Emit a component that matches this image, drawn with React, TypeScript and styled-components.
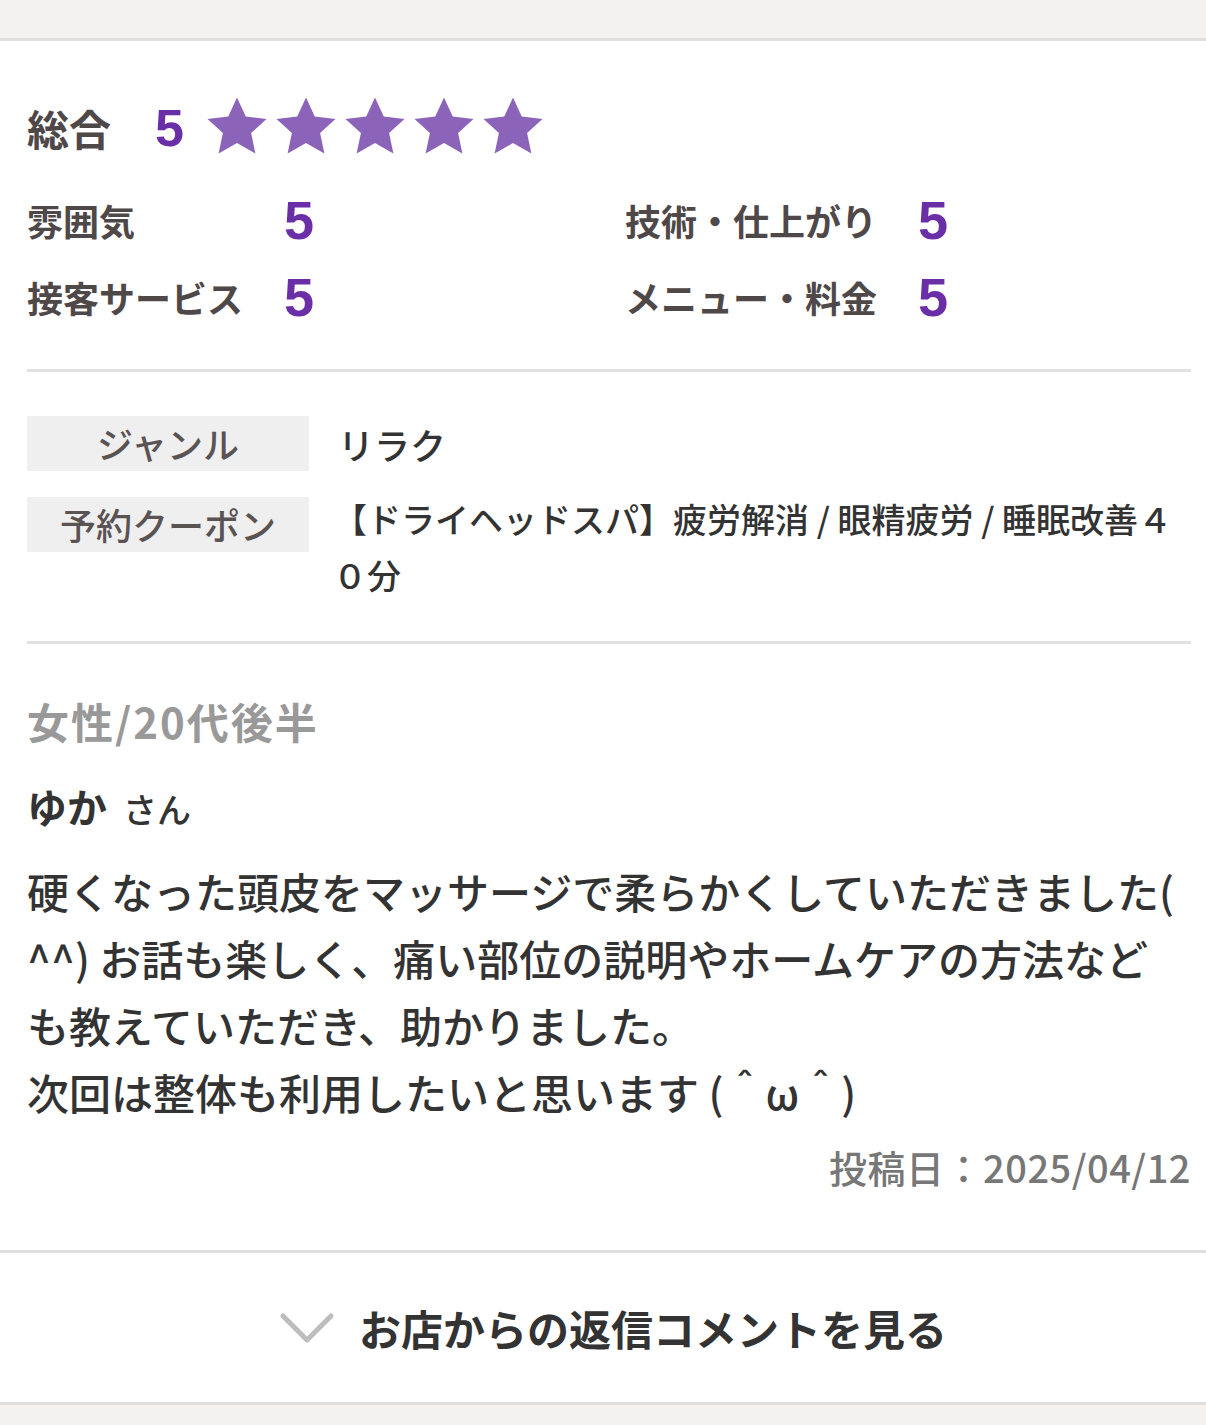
import React, { FC } from "react";
import styled, { createGlobalStyle } from "styled-components";

const GlobalStyle = createGlobalStyle`
  body {
    margin: 0;
    background: #f3f2f1;
    font-family: "Noto Sans CJK JP", "Noto Sans", sans-serif;
    color: #333;
  }
`;

interface Rating {
  label: string;
  score: number;
}

const ratings: Rating[] = [
  { label: "雰囲気", score: 5 },
  { label: "技術・仕上がり", score: 5 },
  { label: "接客サービス", score: 5 },
  { label: "メニュー・料金", score: 5 },
];

const Star: FC = () => (
  <svg width="64" height="60" viewBox="0 0 24 23">
    <path
      d="M12 0.6l3.35 7.3 7.95 0.9-5.9 5.4 1.65 7.85L12 18.05l-7.05 4 1.65-7.85-5.9-5.4 7.95-0.9z"
      fill="#8b63b8"
    />
  </svg>
);

const Chevron: FC = () => (
  <svg width="56" height="32" viewBox="0 0 56 32">
    <polyline
      points="4,4 28,28 52,4"
      fill="none"
      stroke="#bdbdbd"
      strokeWidth="5"
      strokeLinecap="round"
      strokeLinejoin="round"
    />
  </svg>
);

const App: FC = () => {
  return (
    <>
      <GlobalStyle />
      <TopBand />
      <Card>
        <Body>
          <TotalRow>
            <TotalLabel>総合</TotalLabel>
            <TotalScore>5</TotalScore>
            <Stars>
              {[0, 1, 2, 3, 4].map((i) => (
                <Star key={i} />
              ))}
            </Stars>
          </TotalRow>

          <RatingGrid>
            {ratings.map((r) => (
              <React.Fragment key={r.label}>
                <RatingLabel>{r.label}</RatingLabel>
                <RatingScore>{r.score}</RatingScore>
              </React.Fragment>
            ))}
          </RatingGrid>

          <Divider />

          <InfoTable>
            <InfoLabel>ジャンル</InfoLabel>
            <InfoValue>リラク</InfoValue>
            <InfoLabel>予約クーポン</InfoLabel>
            <InfoValue $small>
              【ドライヘッドスパ】疲労解消 / 眼精疲労 / 睡眠改善４０分
            </InfoValue>
          </InfoTable>

          <Divider $top={38} />

          <Profile>女性/20代後半</Profile>
          <Name>
            ゆか<Honorific>さん</Honorific>
          </Name>
          <Comment>
            硬くなった頭皮をマッサージで柔らかくしていただきました(
            <br />
            ^^) お話も楽しく、痛い部位の説明やホームケアの方法など
            <br />
            も教えていただき、助かりました。
            <br />
            次回は整体も利用したいと思います (＾ω＾)
          </Comment>
          <PostDate>投稿日：2025/04/12</PostDate>
        </Body>

        <ReplyButton type="button">
          <Chevron />
          <span>お店からの返信コメントを見る</span>
        </ReplyButton>
      </Card>
    </>
  );
};

const TopBand = styled.div`
  height: 38px;
  background: #f3f2f1;
`;

const Card = styled.section`
  background: #fff;
  border-top: 3px solid #dedede;
  border-bottom: 3px solid #dedede;
  margin-bottom: 20px;
`;

const Body = styled.div`
  padding: 57px 15px 58px 27px;
  border-bottom: 3px solid #dedede;
`;

const TotalRow = styled.div`
  display: flex;
  align-items: center;
  height: 60px;
`;

const TotalLabel = styled.span`
  font-size: 42px;
  font-weight: 700;
  color: #4f4849;
  width: 128px;
  line-height: 1;
`;

const TotalScore = styled.span`
  font-family: "Liberation Sans", Arial, sans-serif;
  font-size: 52px;
  font-weight: 700;
  color: #6a2ea6;
  width: 50px;
  line-height: 1;
`;

const Stars = styled.div`
  display: flex;
  gap: 5px;
  margin-top: -4px;
`;

const RatingGrid = styled.div`
  display: grid;
  grid-template-columns: 257px 341px 293px 1fr;
  grid-auto-rows: 60px;
  row-gap: 17px;
  margin-top: 32px;
  align-items: center;
`;

const RatingLabel = styled.span`
  font-size: 36px;
  font-weight: 700;
  color: #4f4849;
  line-height: 1;
`;

const RatingScore = styled.span`
  font-family: "Liberation Sans", Arial, sans-serif;
  font-size: 54px;
  font-weight: 700;
  color: #6a2ea6;
  line-height: 1;
`;

const Divider = styled.hr<{ $top?: number }>`
  border: none;
  height: 3px;
  background: #e2e2e2;
  margin: ${({ $top = 42 }) => $top}px 0 0;
`;

const InfoTable = styled.div`
  display: grid;
  grid-template-columns: 282px 1fr;
  column-gap: 29px;
  row-gap: 25px;
  margin-top: 44px;
  align-items: start;
`;

const InfoLabel = styled.div`
  height: 55px;
  background: #efefef;
  color: #5a5354;
  font-size: 36px;
  font-weight: 500;
  line-height: 55px;
  text-align: center;
`;

const InfoValue = styled.div<{ $small?: boolean }>`
  font-size: ${({ $small }) => ($small ? 34 : 36)}px;
  font-weight: 500;
  line-height: 56px;
  color: #333;
  margin: ${({ $small }) => ($small ? "-6px 0 0 -5px" : "0")};
`;

const Profile = styled.div`
  margin-top: 47px;
  font-size: 42px;
  font-weight: 700;
  line-height: 60px;
  color: #999;
  letter-spacing: 2px;
`;

const Name = styled.div`
  margin-top: 25px;
  font-size: 40px;
  font-weight: 700;
  line-height: 60px;
  color: #333;
`;

const Honorific = styled.span`
  font-size: 34px;
  font-weight: 500;
  margin-left: 16px;
`;

const Comment = styled.p`
  margin: 18px 0 0;
  font-size: 42px;
  font-weight: 500;
  line-height: 67px;
  color: #333;
`;

const PostDate = styled.div`
  margin-top: 17px;
  text-align: right;
  font-size: 38px;
  font-weight: 500;
  line-height: 50px;
  color: #777;
  letter-spacing: 0.5px;
`;

const ReplyButton = styled.button`
  display: flex;
  align-items: center;
  justify-content: center;
  gap: 24px;
  width: 100%;
  height: 149px;
  padding: 0 0 0 20px;
  border: none;
  background: #fff;
  font-family: "Noto Sans CJK JP", "Noto Sans", sans-serif;
  font-size: 42px;
  font-weight: 700;
  color: #333;
  cursor: pointer;
`;

export default App;
